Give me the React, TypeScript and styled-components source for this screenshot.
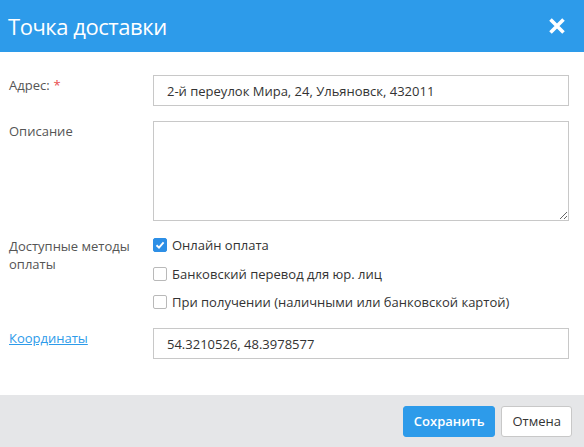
import React from "react";
import styled, { createGlobalStyle } from "styled-components";

const GlobalStyle = createGlobalStyle`
  html, body {
    margin: 0;
    padding: 0;
    background: #ffffff;
  }
  body {
    font-family: "Open Sans", "Noto Sans", sans-serif;
    font-size: 13px;
    color: #333333;
  }
  * {
    box-sizing: border-box;
  }
`;

const Dialog = styled.div`
  width: 584px;
  height: 447px;
  display: flex;
  flex-direction: column;
  background: #ffffff;
`;

const Header = styled.div`
  height: 52px;
  flex: none;
  display: flex;
  align-items: center;
  justify-content: space-between;
  padding: 0 16px 0 8px;
  background: #2d9bea;
`;

const Title = styled.h1`
  margin: 0;
  font-size: 22px;
  font-weight: 400;
  line-height: 30px;
  color: #ffffff;
  letter-spacing: -0.45px;
`;

const CloseButton = styled.button`
  width: 22px;
  height: 22px;
  padding: 0;
  border: none;
  background: transparent;
  display: flex;
  align-items: center;
  justify-content: center;
  cursor: pointer;
`;

const Body = styled.div`
  flex: 1;
  display: flex;
  flex-direction: column;
  gap: 15px;
  padding: 23px 15px 0 9px;
`;

const Row = styled.div<{ $gapTop?: number }>`
  display: grid;
  grid-template-columns: 144px 1fr;
  align-items: start;
  margin-top: ${(p) => p.$gapTop ?? 0}px;
`;

const Label = styled.div`
  line-height: 18px;
  padding-top: 1px;
  color: #555555;
  padding-right: 10px;
`;

const Required = styled.span`
  color: #e84c4c;
  margin-left: 4px;
`;

const LinkLabel = styled.a`
  color: #2d9bea;
  text-decoration: underline;
  cursor: pointer;
`;

const TextInput = styled.input`
  width: 100%;
  height: 31px;
  padding: 0 13px;
  border: 1px solid #c8c8c8;
  border-radius: 0;
  font-family: inherit;
  font-size: 13px;
  color: #333333;
  outline: none;
`;

const TextArea = styled.textarea`
  display: block;
  width: 100%;
  height: 100px;
  border: 1px solid #c8c8c8;
  border-radius: 0;
  font-family: inherit;
  font-size: 13px;
  outline: none;
  resize: vertical;
`;

const Options = styled.div`
  display: flex;
  flex-direction: column;
  gap: 10.5px;
`;

const Option = styled.label`
  display: flex;
  align-items: center;
  gap: 5px;
  line-height: 18px;
  color: #333333;
  cursor: pointer;
`;

const Box = styled.span<{ $checked?: boolean }>`
  width: 14px;
  height: 14px;
  flex: none;
  border-radius: 2px;
  display: flex;
  align-items: center;
  justify-content: center;
  background: ${(p) => (p.$checked ? "#2d8fe6" : "#ffffff")};
  border: 1px solid ${(p) => (p.$checked ? "#2d8fe6" : "#b9b9b9")};
`;

const Footer = styled.div`
  height: 52px;
  flex: none;
  display: flex;
  align-items: center;
  justify-content: flex-end;
  gap: 6px;
  padding: 0 12px;
  background: #e5e6e8;
`;

const Button = styled.button<{ $primary?: boolean }>`
  height: 31px;
  padding: 0 10px;
  border-radius: 3px;
  font-family: inherit;
  font-size: 13px;
  font-weight: ${(p) => (p.$primary ? 600 : 400)};
  color: ${(p) => (p.$primary ? "#ffffff" : "#333333")};
  background: ${(p) => (p.$primary ? "#2d9bea" : "#ffffff")};
  border: 1px solid ${(p) => (p.$primary ? "#2d9bea" : "#c8c8c8")};
  cursor: pointer;
`;

const Check = ({ checked, children }: { checked?: boolean; children: React.ReactNode }) => (
  <Option>
    <Box $checked={checked}>
      {checked && (
        <svg width="10" height="10" viewBox="0 0 10 10">
          <path d="M1.5 5.2 L4 7.6 L8.6 2.4" fill="none" stroke="#fff" strokeWidth="1.9" />
        </svg>
      )}
    </Box>
    {children}
  </Option>
);

const App = () => {
  return (
    <>
      <GlobalStyle />
      <Dialog>
        <Header>
          <Title>Точка доставки</Title>
          <CloseButton aria-label="Закрыть">
            <svg width="18" height="18" viewBox="0 0 18 18">
              <path d="M2.5 2.5 L15.5 15.5 M15.5 2.5 L2.5 15.5" stroke="#fff" strokeWidth="3.6" />
            </svg>
          </CloseButton>
        </Header>
        <Body>
          <Row>
            <Label>
              Адрес:<Required>*</Required>
            </Label>
            <TextInput defaultValue="2-й переулок Мира, 24, Ульяновск, 432011" />
          </Row>
          <Row>
            <Label>Описание</Label>
            <TextArea />
          </Row>
          <Row>
            <Label>Доступные методы оплаты</Label>
            <Options>
              <Check checked>Онлайн оплата</Check>
              <Check>Банковский перевод для юр. лиц</Check>
              <Check>При получении (наличными или банковской картой)</Check>
            </Options>
          </Row>
          <Row $gapTop={2}>
            <Label>
              <LinkLabel>Координаты</LinkLabel>
            </Label>
            <TextInput defaultValue="54.3210526, 48.3978577" />
          </Row>
        </Body>
        <Footer>
          <Button $primary>Сохранить</Button>
          <Button>Отмена</Button>
        </Footer>
      </Dialog>
    </>
  );
};

export default App;
